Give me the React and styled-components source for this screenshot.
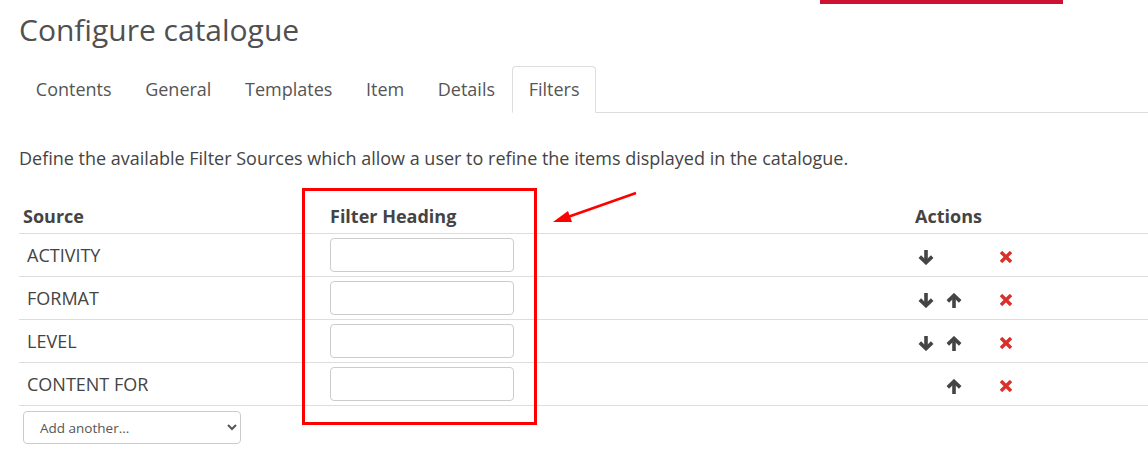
import styled, { createGlobalStyle } from "styled-components";

const GlobalStyle = createGlobalStyle`
  body {
    margin: 0;
    background: #fff;
    font-family: "Open Sans", "DejaVu Sans", sans-serif;
    color: #444;
  }
`;

const Page = styled.div`
  position: relative;
  padding-left: 19px;
  height: 472px;
  overflow: hidden;
`;

const TopStrip = styled.div`
  height: 4px;
  display: flex;
`;

const RedBar = styled.div`
  margin-left: 801px;
  width: 243px;
  background: #cc1133;
`;

const Title = styled.h1`
  margin: 6px 0 0;
  font-size: 30px;
  font-weight: 400;
  line-height: 40px;
  color: #505050;
`;

const Tabs = styled.ul`
  list-style: none;
  margin: 16px 0 0;
  padding: 0;
  display: flex;
  border-bottom: 1px solid #ddd;
`;

const Tab = styled.li`
  height: 47px;
  display: flex;
  align-items: center;
  padding: 0 15.8px 2px;
  margin-bottom: -1px;
  font-size: 18px;
  line-height: 24px;
  box-sizing: border-box;
  color: #555;
  border: 1px solid ${(p) => (p.$active ? "#ddd" : "transparent")};
  border-bottom-color: ${(p) => (p.$active ? "#fff" : "transparent")};
  border-radius: 4px 4px 0 0;
  background: #fff;
`;

const Intro = styled.p`
  margin: 33px 0 0;
  font-size: 18px;
  line-height: 24px;
  color: #444;
`;

const Table = styled.table`
  margin-top: 29px;
  width: 100%;
  table-layout: fixed;
  border-collapse: collapse;
`;

const Th = styled.th`
  height: 34px;
  padding: 0 4px;
  text-align: left;
  font-size: 18px;
  line-height: 24px;
  font-weight: 700;
  color: #444;
  border-bottom: 1px solid #ddd;
  vertical-align: middle;
`;

const Row = styled.tr`
  height: 43px;
  border-bottom: 1px solid #ddd;
`;

const Td = styled.td`
  padding: 0 ${(p) => (p.$source ? "8px" : "4px")};
  font-size: 18px;
  line-height: 24px;
  color: #444;
  vertical-align: middle;
`;

const TextInput = styled.input`
  display: block;
  box-sizing: border-box;
  width: 184px;
  height: 34px;
  border: 1px solid #ccc;
  border-radius: 4px;
  background: #fff;
`;

const Actions = styled.div`
  display: flex;
  align-items: center;
  padding-left: 3px;
  padding-top: 4px;
`;

const Slot = styled.span`
  width: ${(p) => p.$w || 28}px;
  display: inline-flex;
  align-items: center;
`;

const AddSelect = styled.select`
  margin: 5px 0 0 4px;
  width: 218px;
  height: 33px;
  padding: 0 12px;
  border: 1px solid #ccc;
  border-radius: 4px;
  background: #fff;
  font-family: "Open Sans", "DejaVu Sans", sans-serif;
  font-size: 13.5px;
  color: #555;
`;

const Highlight = styled.div`
  position: absolute;
  left: 302px;
  top: 188px;
  width: 235px;
  height: 237px;
  box-sizing: border-box;
  border: 3px solid #ff0000;
  pointer-events: none;
`;

const Pointer = styled.svg`
  position: absolute;
  left: 545px;
  top: 185px;
  pointer-events: none;
`;

function ArrowIcon({ up }) {
  return (
    <svg width="16" height="15" viewBox="0 0 16 15" style={up ? { transform: "rotate(180deg)" } : undefined}>
      <g fill="none" stroke="#444" strokeWidth="3.6" strokeLinejoin="miter">
        <line x1="8" y1="0" x2="8" y2="12" />
        <polyline points="1.8,6.6 8,12.6 14.2,6.6" />
      </g>
    </svg>
  );
}

function RemoveIcon() {
  return (
    <svg width="12" height="12" viewBox="0 0 12 12">
      <g stroke="#d9302c" strokeWidth="3.4" strokeLinecap="butt">
        <line x1="1" y1="1" x2="11" y2="11" />
        <line x1="11" y1="1" x2="1" y2="11" />
      </g>
    </svg>
  );
}

const rows = [
  { name: "ACTIVITY", down: true, up: false },
  { name: "FORMAT", down: true, up: true },
  { name: "LEVEL", down: true, up: true },
  { name: "CONTENT FOR", down: false, up: true },
];

export default function App() {
  return (
    <Page>
      <GlobalStyle />
      <TopStrip>
        <RedBar />
      </TopStrip>
      <Title>Configure catalogue</Title>
      <Tabs>
        {["Contents", "General", "Templates", "Item", "Details", "Filters"].map((t) => (
          <Tab key={t} $active={t === "Filters"}>
            {t}
          </Tab>
        ))}
      </Tabs>
      <Intro>
        Define the available Filter Sources which allow a user to refine the items displayed in the
        catalogue.
      </Intro>
      <Table>
        <colgroup>
          <col style={{ width: 307 }} />
          <col style={{ width: 585 }} />
          <col />
        </colgroup>
        <thead>
          <tr>
            <Th>Source</Th>
            <Th>Filter Heading</Th>
            <Th>Actions</Th>
          </tr>
        </thead>
        <tbody>
          {rows.map((r) => (
            <Row key={r.name}>
              <Td $source>{r.name}</Td>
              <Td>
                <TextInput type="text" />
              </Td>
              <Td>
                <Actions>
                  <Slot>{r.down && <ArrowIcon />}</Slot>
                  <Slot $w={54}>{r.up && <ArrowIcon up />}</Slot>
                  <Slot>
                    <RemoveIcon />
                  </Slot>
                </Actions>
              </Td>
            </Row>
          ))}
        </tbody>
      </Table>
      <AddSelect defaultValue="">
        <option value="">Add another...</option>
      </AddSelect>
      <Highlight />
      <Pointer width="100" height="45" viewBox="0 0 100 45">
        <line x1="91" y1="8" x2="20" y2="33" stroke="#ff0000" strokeWidth="2.5" />
        <polygon points="8,37 23,26 27,37" fill="#ff0000" />
      </Pointer>
    </Page>
  );
}
